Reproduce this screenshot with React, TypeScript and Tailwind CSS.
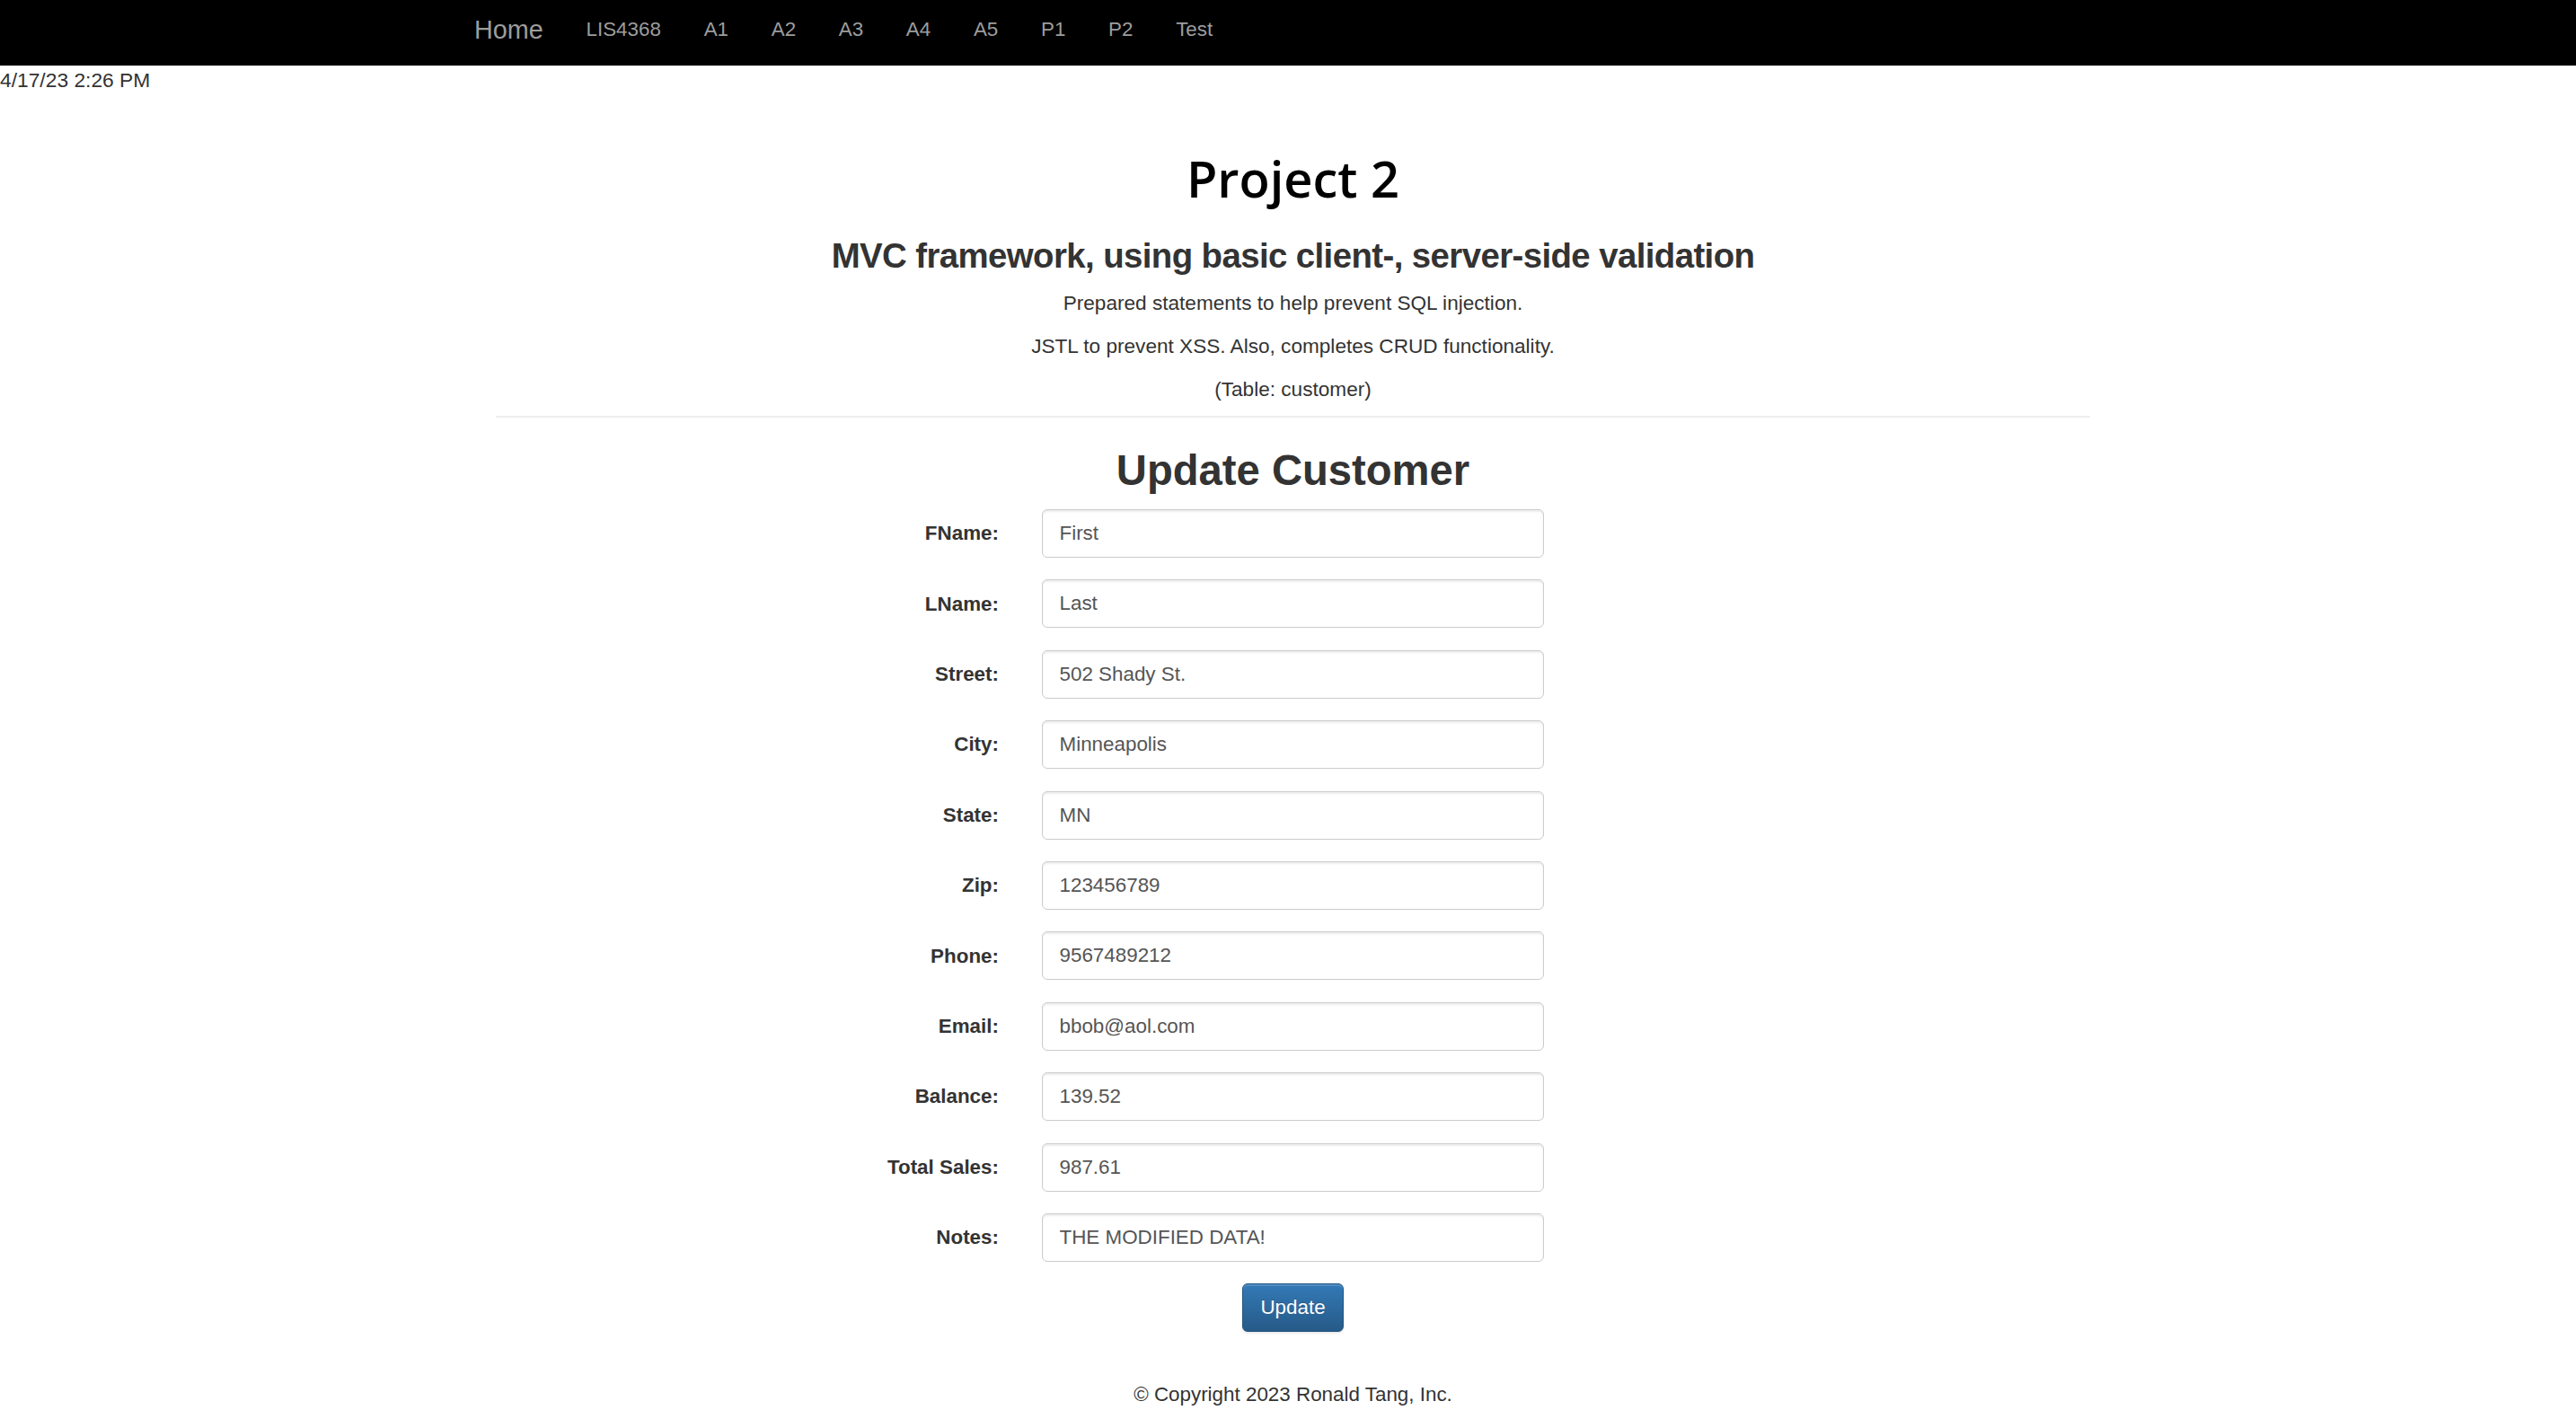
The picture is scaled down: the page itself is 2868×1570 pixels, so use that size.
const navLinks = ["LIS4368", "A1", "A2", "A3", "A4", "A5", "P1", "P2", "Test"];

const fields = [
  { label: "FName", value: "First" },
  { label: "LName", value: "Last" },
  { label: "Street", value: "502 Shady St." },
  { label: "City", value: "Minneapolis" },
  { label: "State", value: "MN" },
  { label: "Zip", value: "123456789" },
  { label: "Phone", value: "9567489212" },
  { label: "Email", value: "bbob@aol.com" },
  { label: "Balance", value: "139.52" },
  { label: "Total Sales", value: "987.61" },
  { label: "Notes", value: "THE MODIFIED DATA!" },
];

function Navbar() {
  return (
    <header className="h-[73px] bg-black">
      <nav className="flex items-center gap-[47.7px] pl-[528px] pt-[13px] leading-[40px] text-[#9d9d9d]">
        <a href="#" className="text-[28.8px]">
          Home
        </a>
        {navLinks.map((link) => (
          <a key={link} href="#" className="text-[22.4px]">
            {link}
          </a>
        ))}
      </nav>
    </header>
  );
}

function FieldRow({ label, value }: { label: string; value: string }) {
  return (
    <div className="flex items-center gap-[48px]">
      <label className="w-[560px] text-right text-[22.4px] font-bold text-[#333333]">{label}:</label>
      <input
        type="text"
        defaultValue={value}
        className="h-[54px] w-[559px] rounded-[6px] border-[1.5px] border-[#cccccc] bg-white px-[18.5px] text-[22.4px] text-[#555555] shadow-[inset_0_2px_2px_rgba(0,0,0,0.075)] outline-none"
      />
    </div>
  );
}

export default function App() {
  return (
    <div className="min-h-screen bg-white font-['Liberation_Sans',Arial,sans-serif] text-[#333333]">
      <Navbar />
      <div className="text-[22.8px] leading-[32px]">4/17/23 2:26 PM</div>

      <main className="mx-auto w-[1786px] pl-[11px]">
        <div className="text-center">
          <h1 className="mt-[61px] font-['Open_Sans',sans-serif] text-[56px] font-semibold leading-[64px] text-black">
            Project 2
          </h1>
          <h3 className="mt-[34px] text-[38.4px] font-bold leading-[42px] tracking-[-0.6px]">
            MVC framework, using basic client-, server-side validation
          </h3>
          <p className="mt-[16px] text-[22.6px] leading-[32px]">Prepared statements to help prevent SQL injection.</p>
          <p className="mt-[16px] text-[22.6px] leading-[32px]">JSTL to prevent XSS. Also, completes CRUD functionality.</p>
          <p className="mt-[16px] text-[22.6px] leading-[32px]">(Table: customer)</p>
        </div>

        <hr className="mt-[13px] h-[2px] border-0 bg-[#eeeeee]" />

        <h2 className="mt-[32px] text-center text-[47.2px] font-bold leading-[53px]">Update Customer</h2>

        <form className="mt-[17px] flex flex-col gap-[24.4px]">
          {fields.map((field) => (
            <FieldRow key={field.label} label={field.label} value={field.value} />
          ))}
        </form>

        <div className="mt-[24px] flex justify-center">
          <button
            type="button"
            className="h-[54px] rounded-[6px] border-[1.5px] border-[#245580] bg-gradient-to-b from-[#337ab7] to-[#265a88] px-[19px] text-[22.4px] text-white shadow-[inset_0_2px_0_rgba(255,255,255,0.15),0_2px_2px_rgba(0,0,0,0.075)] [text-shadow:0_-1px_0_rgba(0,0,0,0.2)]"
          >
            Update
          </button>
        </div>

        <footer className="mt-[54px] text-center text-[22.4px] leading-[32px]">© Copyright 2023 Ronald Tang, Inc.</footer>
      </main>
    </div>
  );
}
